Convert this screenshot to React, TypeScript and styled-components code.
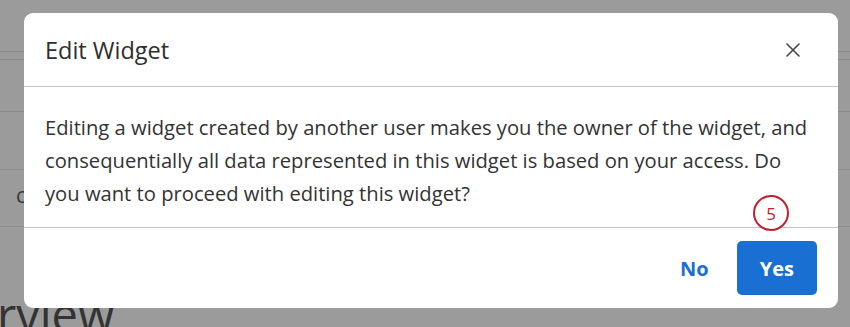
import styled, { createGlobalStyle } from 'styled-components'

const GlobalStyle = createGlobalStyle`
	html, body {
		margin: 0;
		padding: 0;
	}
	body {
		width: 850px;
		height: 327px;
		overflow: hidden;
		background: #9b9b9b;
		font-family: "Open Sans", "Noto Sans", sans-serif;
	}
`

export default function App() {
	return (
		<>
			<GlobalStyle />
			<Page>
				<Row h={51} />
				<Row h={7} />
				<Row h={51} />
				<Row h={57} />
				<FilterRow>
					<FilterText>c</FilterText>
				</FilterRow>
				<Heading>rview</Heading>
			</Page>
			<Modal role="dialog">
				<Header>
					<Title>Edit Widget</Title>
					<CloseButton aria-label="Close">
						<svg width="16" height="16" viewBox="0 0 16 16">
							<path d="M2 2 L14 14 M14 2 L2 14" stroke="#444" strokeWidth="1.6" strokeLinecap="round" />
						</svg>
					</CloseButton>
				</Header>
				<Body>
					Editing a widget created by another user makes you the owner of the widget, and
					<br />
					consequentially all data represented in this widget is based on your access. Do
					<br />
					you want to proceed with editing this widget?
				</Body>
				<Footer>
					<Step>5</Step>
					<Button>No</Button>
					<Button primary>Yes</Button>
				</Footer>
			</Modal>
		</>
	)
}

const Page = styled.div`
	display: flex;
	flex-direction: column;
	height: 327px;
	overflow: hidden;
`

const Row = styled.div<{ h: number }>`
	height: ${(p) => p.h}px;
	border-bottom: 1px solid #8a8a8a;
	flex-shrink: 0;
`

const FilterRow = styled.div`
	height: 57px;
	border-bottom: 1px solid #8c8c8c;
	display: flex;
	align-items: center;
	padding: 0 0 6px 16px;
	box-sizing: border-box;
	flex-shrink: 0;
`

const FilterText = styled.span`
	font-size: 21px;
	color: #3a3a3a;
`

const Heading = styled.h1`
	margin: 64px 0 0 -3px;
	font-size: 47px;
	font-weight: 400;
	color: #333;
	line-height: 1;
	flex-shrink: 0;
`

const Modal = styled.div`
	position: absolute;
	top: 13px;
	left: 24px;
	width: 814px;
	height: 295px;
	background: #fff;
	border-radius: 9px;
	display: flex;
	flex-direction: column;
	box-sizing: border-box;
`

const Header = styled.div`
	height: 74px;
	box-sizing: border-box;
	border-bottom: 1px solid #c4c4c4;
	display: flex;
	align-items: center;
	justify-content: space-between;
	padding: 0 37px 0 21px;
`

const Title = styled.h2`
	margin: 0;
	font-size: 23.5px;
	font-weight: 400;
	color: #2e2e2e;
`

const CloseButton = styled.button`
	border: none;
	background: none;
	padding: 0;
	display: flex;
	cursor: pointer;
`

const Body = styled.div`
	height: 141px;
	box-sizing: border-box;
	border-bottom: 1px solid #c4c4c4;
	padding: 24px 10px 0 21px;
	font-size: 20.2px;
	line-height: 33px;
	color: #333;
	white-space: nowrap;
`

const Footer = styled.div`
	position: relative;
	flex: 1;
	display: flex;
	align-items: center;
	justify-content: flex-end;
	gap: 12px;
	padding: 0 21px 0 0;
`

const Step = styled.span`
	position: absolute;
	right: 49px;
	top: -33px;
	width: 32px;
	height: 32px;
	border: 2px solid #c0202f;
	border-radius: 50%;
	display: flex;
	align-items: center;
	justify-content: center;
	color: #c0202f;
	font-size: 17px;
	background: #fff;
`

const Button = styled.button<{ primary?: boolean }>`
	height: 54px;
	padding: 0 ${(p) => (p.primary ? '23px' : '16px')};
	border: none;
	border-radius: 5px;
	background: ${(p) => (p.primary ? '#1a6fd3' : 'transparent')};
	color: ${(p) => (p.primary ? '#fff' : '#1a6fd3')};
	font-family: "Open Sans", sans-serif;
	font-size: 20px;
	font-weight: 700;
	cursor: pointer;
`
